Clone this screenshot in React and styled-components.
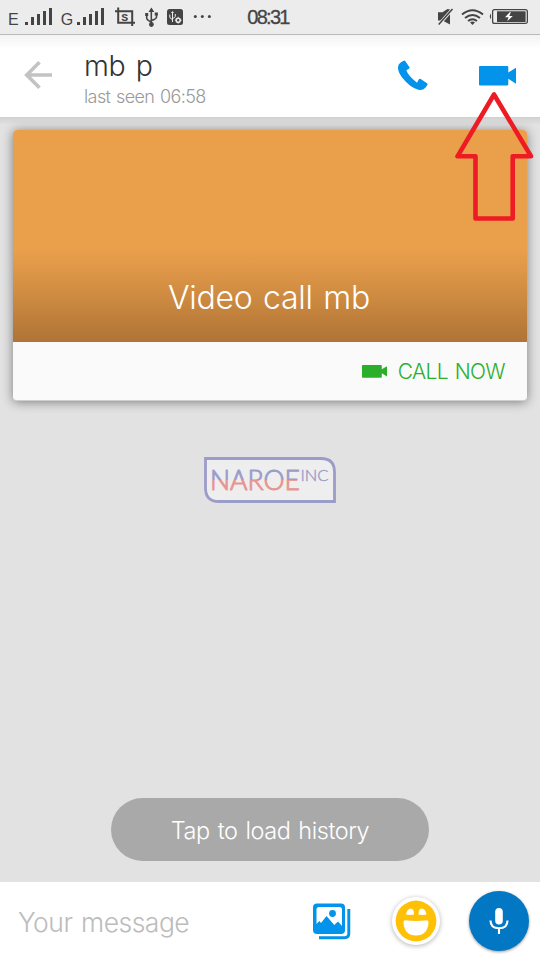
import styled, { createGlobalStyle, css } from "styled-components";

const GlobalStyle = createGlobalStyle`
  * {
    box-sizing: border-box;
  }
  body {
    margin: 0;
    background: #fff;
    font-family: Inter, "Liberation Sans", sans-serif;
    font-weight: 300;
  }
`;

const Screen = styled.div`
  position: relative;
  display: flex;
  flex-direction: column;
  width: 540px;
  height: 960px;
  overflow: hidden;
`;

const StatusBar = styled.div`
  display: grid;
  grid-template-columns: 1fr auto 1fr;
  align-items: center;
  height: 35px;
  padding: 0 12px 0 8px;
  background: #ececec;
  border-bottom: 1px solid #b9b9b9;
  color: #444;
`;

const StatusGroup = styled.div`
  display: flex;
  align-items: center;
  justify-content: ${({ $end }) => ($end ? "flex-end" : "flex-start")};
  svg {
    display: block;
    flex: none;
  }
`;

const Clock = styled.span`
  padding-top: 1px;
  font-size: 20px;
  font-weight: 400;
  line-height: 33px;
  letter-spacing: -1.7px;
  font-family: "Liberation Sans", sans-serif;
  -webkit-text-stroke: 0.3px #444;
`;

const Header = styled.header`
  display: flex;
  align-items: center;
  flex: none;
  height: 82px;
  padding: 0 24px 2px 24px;
  background: linear-gradient(#f3f3f3, #fff 14px);
  svg {
    display: block;
    flex: none;
  }
`;

const Contact = styled.div`
  flex: 1;
  padding: 9px 0 0 31px;
`;

const Name = styled.h1`
  margin: 0;
  color: #333;
  font-size: 28.5px;
  font-weight: 300;
  line-height: 34px;
  letter-spacing: -0.3px;
  word-spacing: 2.5px;
`;

const LastSeen = styled.p`
  margin: 0;
  color: #999;
  font-size: 18px;
  line-height: 27px;
  letter-spacing: -0.6px;
  word-spacing: 1.2px;
`;

const HeaderActions = styled.div`
  display: flex;
  align-items: center;
  gap: 51px;
  padding-top: 1px;
`;

const Chat = styled.main`
  display: flex;
  flex-direction: column;
  align-items: center;
  flex: none;
  height: 765px;
  padding: 13px 13px 21px;
  background: linear-gradient(#cfcfcf, #d8d8d8 3px, #dcdcdc 6px, #e2e2e2 7px);
`;

const Card = styled.section`
  width: 514px;
  height: 271px;
  flex: none;
  overflow: hidden;
  border-radius: 4px;
  border-bottom: 1px solid #cfcfcf;
  background: #fafafa;
  box-shadow: 0 1px 11px rgba(0, 0, 0, 0.46);
`;

const CardCover = styled.div`
  display: flex;
  align-items: flex-end;
  justify-content: center;
  height: 212px;
  padding-bottom: 24px;
  background: linear-gradient(#ea9f4b 118px, #e09848 138px, #b07436);
`;

const CardTitle = styled.h2`
  margin: 0;
  padding-right: 2px;
  color: #fff;
  font-size: 32px;
  font-weight: 300;
  line-height: 40px;
  letter-spacing: -0.3px;
  word-spacing: 2px;
`;

const CallNow = styled.div`
  display: flex;
  align-items: center;
  justify-content: flex-end;
  gap: 11px;
  height: 58px;
  padding: 0 22px 0 0;
  color: #2baf2b;
  font-size: 21px;
  letter-spacing: -0.65px;
  word-spacing: 1.5px;
`;

const Logo = styled.svg`
  display: block;
  flex: none;
  margin-top: 56px;
`;

const LoadHistory = styled.button`
  width: 318px;
  height: 63px;
  margin-top: auto;
  padding: 2px 0 0;
  border: 0;
  border-radius: 32px;
  background: #a9a9a9;
  color: #fff;
  font: 300 23.5px Inter, "Liberation Sans", sans-serif;
  letter-spacing: -0.45px;
  word-spacing: 1.8px;
`;

const Composer = styled.footer`
  display: flex;
  align-items: center;
  flex: none;
  height: 78px;
  padding: 0 11px 0 18px;
  background: #fff;
`;

const Placeholder = styled.span`
  flex: 1;
  padding-top: 1px;
  color: #bcbcbc;
  font-size: 26.5px;
  line-height: 34px;
  letter-spacing: -0.5px;
  word-spacing: 1.6px;
`;

const round = css`
  display: flex;
  align-items: center;
  justify-content: center;
  flex: none;
  border-radius: 50%;
`;

const Smiley = styled.div`
  ${round}
  width: 48px;
  height: 48px;
  margin: 0 29px 0 41px;
  background: #fff;
  box-shadow: 0 1px 5px rgba(0, 0, 0, 0.3);
`;

const MicButton = styled.div`
  ${round}
  width: 60px;
  height: 60px;
  background: #0277c4;
  box-shadow: 0 1px 3px rgba(0, 0, 0, 0.4);
`;

const Pointer = styled.svg`
  position: absolute;
  left: 450px;
  top: 88px;
`;

const Signal = ({ letter, shift = 0 }) => (
  <svg width="52" height="34" viewBox="0 0 52 34" fill="#444">
    <text x={shift} y="25" fontSize="16" fontFamily="Liberation Sans, sans-serif">
      {letter}
    </text>
    <path d="M17 22h3v3h-3zM23 17h3v8h-3zM29 14h3v11h-3zM35 11h3v14h-3zM41 8h3v17h-3z" />
  </svg>
);

const StatusIcons = () => (
  <svg width="100" height="34" viewBox="112 0 100 34" fill="none" stroke="#444">
    <path d="M115 11.2h17.2V26M118.200 7.500V22.800H135" strokeWidth="2" />
    <text
      x="121.200"
      y="21"
      fontSize="11.500"
      fontWeight="bold"
      fill="#444"
      stroke="none"
      fontFamily="Liberation Mono, monospace"
    >
      S
    </text>
    <path
      d="M151.300 9v16M146.700 14v4q0 2 4.600 4M156.500 14v3q0 2-5.200 3.500"
      strokeWidth="1.600"
    />
    <path
      d="M148.500 12l2.900-4.500 2.900 4.500zM145.200 13h3v3h-3zM154.700 12.500h3.200v3h-3.200z"
      fill="#444"
      stroke="none"
    />
    <circle cx="151.400" cy="24.500" r="2.400" fill="#444" stroke="none" />
    <rect x="167" y="9" width="16" height="16" rx="2.500" fill="#444" stroke="none" />
    <path d="M172.500 12v10M169.800 14.500v2.500q0 1.500 2.700 2.500M175.300 14v2.500q0 1-2.800 2" stroke="#ececec" />
    <path d="M171 13l1.500-2 1.500 2z" fill="#ececec" stroke="none" />
    <circle cx="178.200" cy="20.200" r="2" stroke="#ececec" strokeWidth="1.600" />
    <path
      d="M178.200 16.800v1M178.200 22.600v1M174.900 20.200h1M180.600 20.200h1"
      stroke="#ececec"
    />
    <g fill="#444" stroke="none">
      <circle cx="195.300" cy="16.500" r="1.500" />
      <circle cx="202.300" cy="16.500" r="1.500" />
      <circle cx="209.400" cy="16.500" r="1.500" />
    </g>
  </svg>
);

const SystemIcons = () => (
  <svg width="92" height="34" viewBox="436 0 92 34" fill="none" stroke="#444">
    <path d="M438 12.200h4.500l5-3.200 2.500.5v15l-7.500-4H438z" fill="#444" stroke="none" />
    <path d="M453 8.500L438.500 25" stroke="#ececec" strokeWidth="3.200" />
    <path d="M452.500 9L438.700 24.500" strokeWidth="1.500" />
    <path
      d="M462 14.500q10.500-8.500 21 0M465 18q7.500-6 15 0M468 21q4.500-3.500 9 0"
      strokeWidth="2"
    />
    <path d="M470 22.300q2.500-1.400 5 0l-2.500 2.600z" fill="#444" stroke="none" />
    <rect x="492.600" y="9.600" width="34.800" height="13.800" rx="2" strokeWidth="1.300" />
    <rect x="497" y="11.300" width="28.600" height="10.700" fill="#444" stroke="none" />
    <path d="M491 13.500q-2.500 2.800 0 5.800z" fill="#444" stroke="none" />
    <path d="M510 12l-5 5.200h3.500l-1.200 4 5.500-5.300h-3.500l1.500-3.900z" fill="#fff" stroke="none" />
  </svg>
);

const BackIcon = () => (
  <svg width="29" height="30" viewBox="0 0 29 30" fill="none" stroke="#c3c3c3" strokeWidth="3.600">
    <path d="M28 15H3M15.500 2.200L2.700 15l12.800 12.800" />
  </svg>
);

const PhoneIcon = () => (
  <svg width="31" height="31" viewBox="0 0 93 93" fill="#0393eb">
    <path d="M12 7L20 2Q23 1 25 4L37 21Q39 24 36 26L28 31Q34 49 60 68L65 59Q67 55 71 57L90 70Q93 72 91 75L85 83Q78 92 66 90Q40 84 14 51Q2 33 3 20Q4 12 12 7Z" />
  </svg>
);

const VideoIcon = ({ width, height, color }) => (
  <svg width={width} height={height} viewBox="0 0 37 20" preserveAspectRatio="none" fill={color}>
    <path d="M1 0h27q1.300 0 1.300 1.300V6.500L37 1.800v16l-7.700-5V18q0 1.500-1.300 1.500H1q-1 0-1-1V1q0-1 1-1z" />
  </svg>
);

const GalleryIcon = () => (
  <svg width="38" height="37" viewBox="0 0 38 37">
    <rect x="0" y="0.500" width="32" height="30.500" rx="4" fill="#0393eb" />
    <path
      d="M3.500 21V6.500q0-2.500 2.500-2.500h20.500q2.500 0 2.500 2.500V23l-4-4.500-3.700 3.500-7.800-9-5.500 7-1.700-2z"
      fill="#fff"
    />
    <circle cx="19.500" cy="10.500" r="3.400" fill="#0393eb" />
    <path
      d="M35.800 6v24.500q0 4.200-4.200 4.200H6"
      fill="none"
      stroke="#0393eb"
      strokeWidth="2.900"
    />
  </svg>
);

const SmileyIcon = () => (
  <svg width="42" height="42" viewBox="0 0 42 42">
    <circle cx="21" cy="21" r="20.400" fill="#ffc107" />
    <path
      d="M11 14.500q1-6 5-6 3 0 3 6-4 .8-8 0zM23.500 14.500q0-6 3-6 4 0 5 6-4 .8-8 0zM10 20.200q11 1.600 22 0 1.800 0 1.500 2.500Q32.500 35.500 21 35.500T8.500 22.700q-.3-2.500 1.500-2.500z"
      fill="#fff"
    />
  </svg>
);

const MicIcon = () => (
  <svg width="20" height="26" viewBox="0 0 20 26">
    <rect x="6.200" y="0" width="7.600" height="16.500" rx="3.800" fill="#fff" />
    <path
      d="M1.500 12.500q0 7.800 8.500 7.800t8.500-7.800M10 20v6"
      fill="none"
      stroke="#fff"
      strokeWidth="2.100"
    />
  </svg>
);

const NaroeLogo = () => (
  <Logo width="132" height="46" viewBox="0 0 132 46">
    <defs>
      <linearGradient id="ink" gradientUnits="userSpaceOnUse" x1="0" y1="13" x2="0" y2="33">
        <stop offset="0.490" stopColor="#9c9cca" />
        <stop offset="0.510" stopColor="#e69494" />
      </linearGradient>
    </defs>
    <path
      d="M1.500 1.500H117Q130.500 1.500 130.500 15V44.500H15Q1.500 44.500 1.500 31Z"
      fill="#eee"
      stroke="#9c9cca"
      strokeWidth="2.800"
    />
    <g fontFamily="Lato, sans-serif" fontWeight="300" strokeLinejoin="round">
      <text
        x="6"
        y="33"
        fontSize="27"
        textLength="90"
        lengthAdjust="spacingAndGlyphs"
        fill="url(#ink)"
        stroke="url(#ink)"
        strokeWidth="1"
      >
        NAROE
      </text>
      <text
        x="96.500"
        y="23.500"
        fontSize="15.500"
        textLength="28"
        lengthAdjust="spacingAndGlyphs"
        fill="#9c9cca"
        stroke="#9c9cca"
        strokeWidth="0.400"
      >
        INC
      </text>
    </g>
  </Logo>
);

const App = () => (
  <>
    <GlobalStyle />
    <Screen>
      <StatusBar>
        <StatusGroup>
          <Signal letter="E" />
          <Signal letter="G" shift={0.7} />
          <StatusIcons />
        </StatusGroup>
        <Clock>08:31</Clock>
        <StatusGroup $end>
          <SystemIcons />
        </StatusGroup>
      </StatusBar>

      <Header>
        <BackIcon />
        <Contact>
          <Name>mb p</Name>
          <LastSeen>last seen 06:58</LastSeen>
        </Contact>
        <HeaderActions>
          <PhoneIcon />
          <VideoIcon width={37} height={20} color="#0393eb" />
        </HeaderActions>
      </Header>

      <Chat>
        <Card>
          <CardCover>
            <CardTitle>Video call mb</CardTitle>
          </CardCover>
          <CallNow>
            <VideoIcon width={25} height={13} color="#2baf2b" />
            CALL NOW
          </CallNow>
        </Card>
        <NaroeLogo />
        <LoadHistory>Tap to load history</LoadHistory>
      </Chat>

      <Composer>
        <Placeholder>Your message</Placeholder>
        <GalleryIcon />
        <Smiley>
          <SmileyIcon />
        </Smiley>
        <MicButton>
          <MicIcon />
        </MicButton>
      </Composer>

      <Pointer width="86" height="136" viewBox="450 88 86 136">
        <path
          d="M494 94.500L457.500 156.300H475.500V218.500H512.700V156.300H531Z"
          fill="none"
          stroke="#ed1c24"
          strokeWidth="4.600"
          strokeLinejoin="round"
        />
      </Pointer>
    </Screen>
  </>
);

export default App;
